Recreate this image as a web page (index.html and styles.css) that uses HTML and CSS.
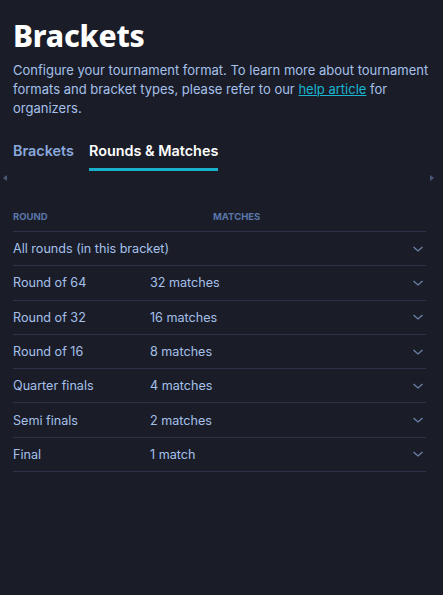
FILE: index.html
```html
<!DOCTYPE html>
<html>
<head>
<meta charset="utf-8">
<link rel="stylesheet" href="styles.css">
</head>
<body>
<div class="page">
  <h1 class="title">Brackets</h1>
  <p class="desc">Configure your tournament format. To learn more about tournament formats and bracket types, please refer to our <a class="link" href="#">help article</a> for organizers.</p>
  <div class="tabs-wrap">
    <span class="arrow arrow-left"></span>
    <div class="tabs">
      <div class="tab">Brackets</div>
      <div class="tab active">Rounds &amp; Matches</div>
    </div>
    <span class="arrow arrow-right"></span>
  </div>
  <div class="table">
    <div class="thead">
      <div class="th th-round">Round</div>
      <div class="th">Matches</div>
    </div>
    <div class="row"><div class="c-round wide">All rounds (in this bracket)</div><svg class="chev" viewBox="0 0 12 8"><path d="M1.5 2l4.5 4 4.5-4"/></svg></div>
    <div class="row"><div class="c-round">Round of 64</div><div class="c-matches">32 matches</div><svg class="chev" viewBox="0 0 12 8"><path d="M1.5 2l4.5 4 4.5-4"/></svg></div>
    <div class="row"><div class="c-round">Round of 32</div><div class="c-matches">16 matches</div><svg class="chev" viewBox="0 0 12 8"><path d="M1.5 2l4.5 4 4.5-4"/></svg></div>
    <div class="row"><div class="c-round">Round of 16</div><div class="c-matches">8 matches</div><svg class="chev" viewBox="0 0 12 8"><path d="M1.5 2l4.5 4 4.5-4"/></svg></div>
    <div class="row"><div class="c-round">Quarter finals</div><div class="c-matches">4 matches</div><svg class="chev" viewBox="0 0 12 8"><path d="M1.5 2l4.5 4 4.5-4"/></svg></div>
    <div class="row"><div class="c-round">Semi finals</div><div class="c-matches">2 matches</div><svg class="chev" viewBox="0 0 12 8"><path d="M1.5 2l4.5 4 4.5-4"/></svg></div>
    <div class="row"><div class="c-round">Final</div><div class="c-matches">1 match</div><svg class="chev" viewBox="0 0 12 8"><path d="M1.5 2l4.5 4 4.5-4"/></svg></div>
  </div>
</div>
</body>
</html>
```
FILE: styles.css
```css
html, body {
  margin: 0;
  padding: 0;
  background: #1a1d28;
}
.page {
  font-family: Inter, "Noto Sans", sans-serif;
  color: #a6c0ea;
  padding: 17px 17px 0 13px;
  min-height: 578px;
}
.title {
  margin: 0;
  font-family: "Noto Sans", Inter, sans-serif;
  font-weight: 800;
  font-size: 30px;
  line-height: 38px;
  color: #ffffff;
  letter-spacing: -0.2px;
}
.desc {
  margin: 6px -10px 0 0;
  font-size: 13px;
  line-height: 19px;
}
.link {
  color: #19b4d0;
  text-decoration: underline;
}
.tabs-wrap {
  position: relative;
  margin: 24px 0 0;
}
.tabs {
  display: flex;
  gap: 15px;
}
.tab {
  font-size: 14.4px;
  font-weight: 600;
  color: #8ba9dc;
  padding: 0 0 9px;
  border-bottom: 3px solid transparent;
}
.tab.active {
  color: #ffffff;
  border-bottom-color: #17b1cc;
}
.arrow {
  position: absolute;
  top: 33px;
  width: 0;
  height: 0;
  border-top: 3px solid transparent;
  border-bottom: 3px solid transparent;
}
.arrow-left {
  left: -10px;
  border-right: 4px solid #4a5878;
}
.arrow-right {
  right: -8px;
  border-left: 4px solid #4a5878;
}
.table {
  margin-top: 40px;
}
.thead {
  display: flex;
  font-size: 9.5px;
  font-weight: 700;
  text-transform: uppercase;
  color: #5a76a8;
  padding: 0 0 9px;
  border-bottom: 1px solid #2d3346;
}
.th-round {
  width: 200px;
}
.row {
  display: flex;
  align-items: center;
  height: 33.3px;
  border-bottom: 1px solid #2d3346;
  font-size: 12.6px;
}
.c-round {
  width: 137px;
}
.c-round.wide {
  width: auto;
}
.c-matches {
  flex: 0 0 auto;
}
.chev {
  margin-left: auto;
  margin-right: 2px;
  width: 12px;
  height: 8px;
  fill: none;
  stroke: #6d82a8;
  stroke-width: 1.3;
}
```
